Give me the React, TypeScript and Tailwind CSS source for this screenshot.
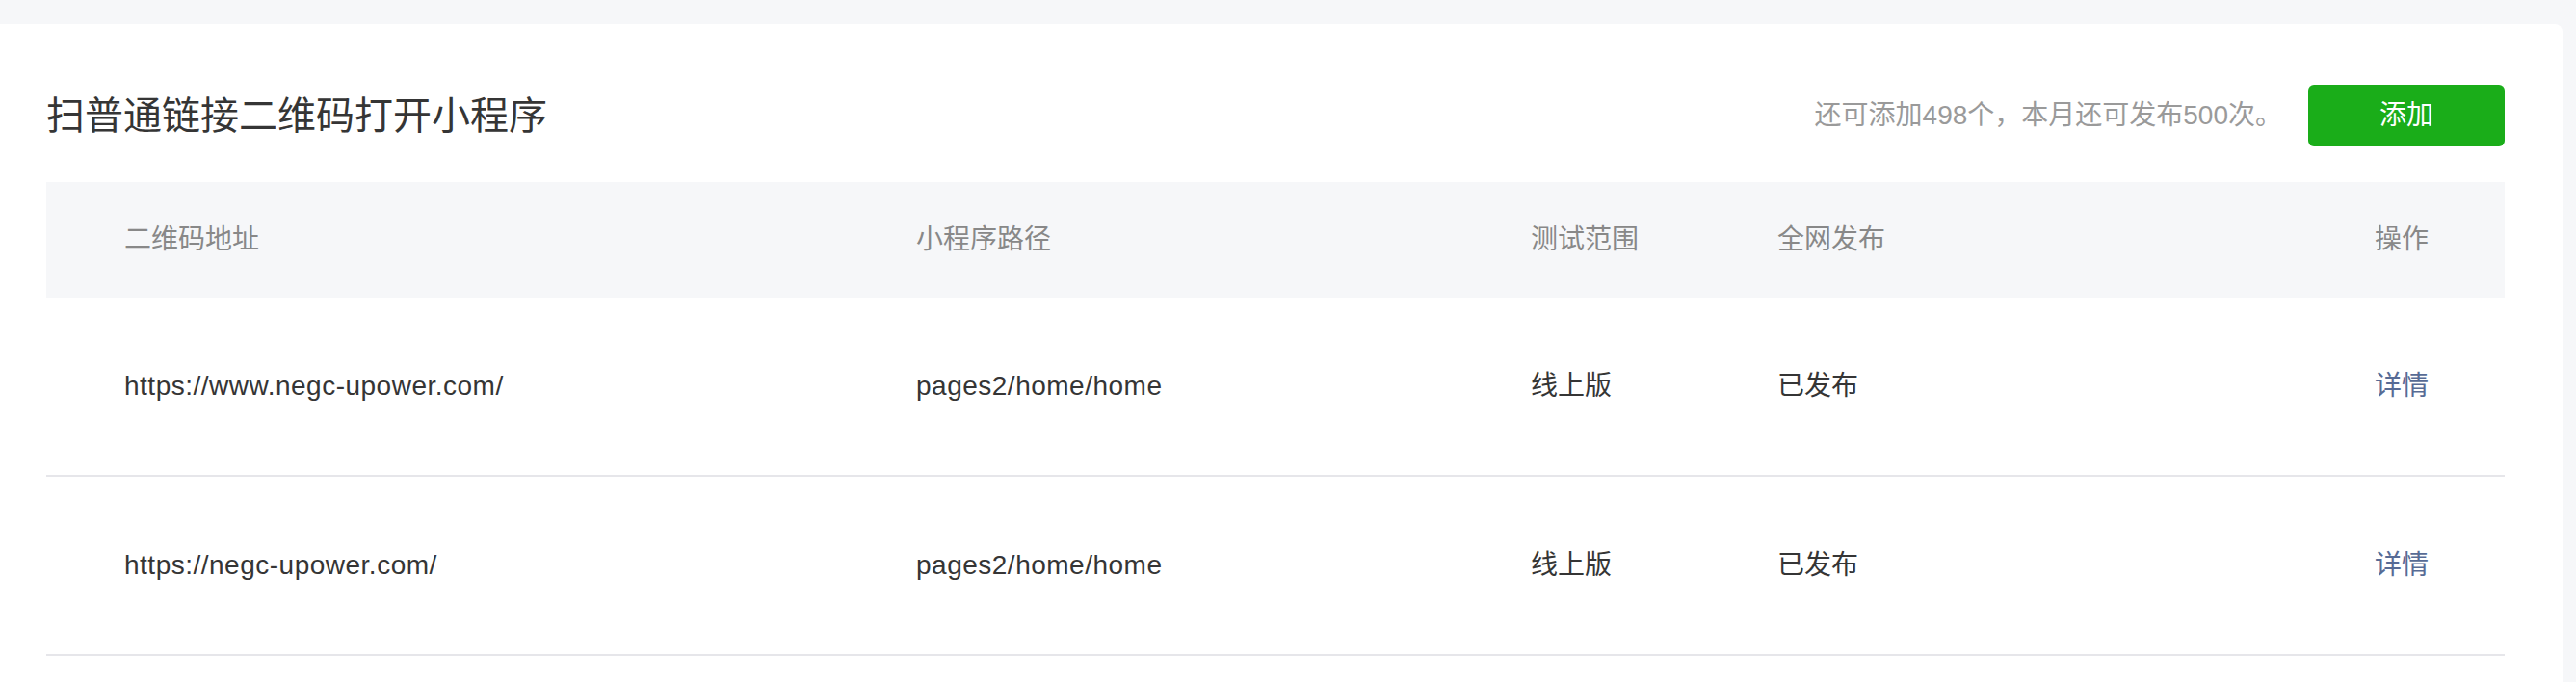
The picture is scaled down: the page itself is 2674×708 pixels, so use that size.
import React from 'react';

const cjk = { fontFamily: '"Liberation Sans", "Noto Sans CJK SC", sans-serif' };

interface LinkRow {
    url: string;
    path: string;
    scope: string;
    status: string;
}

const rows: LinkRow[] = [
    { url: 'https://www.negc-upower.com/', path: 'pages2/home/home', scope: '线上版', status: '已发布' },
    { url: 'https://negc-upower.com/', path: 'pages2/home/home', scope: '线上版', status: '已发布' },
];

const cols = 'grid grid-cols-[822px_638px_256px_620px_56px] pl-[81px] pr-[79px]';

function Watermark() {
    // faint user-id watermark tiled across the page
    return (
        <div className="pointer-events-none absolute left-[85px] top-[70px] flex flex-col">
            {Array.from({ length: 7 }).map((_, r) => (
                <div key={r} className="flex h-[92.5px]">
                    {Array.from({ length: 9 }).map((_, c) => (
                        <span key={c} className="w-[313px] shrink-0 text-[26px] leading-[26px] text-black/[0.012]">
                            1dZen0g2
                        </span>
                    ))}
                </div>
            ))}
        </div>
    );
}

export default function App() {
    return (
        <div className="relative h-[708px] overflow-hidden bg-[#f6f7f9] pt-[25px] pr-[14px]" style={cjk}>
            <div className="h-full rounded-tr-[8px] bg-white pl-[48px] pr-[60px]">
                <div className="flex items-center justify-between pt-[63px] pb-[37px]">
                    <h2 className="text-[40px] leading-[64px] font-normal text-[#353535]">扫普通链接二维码打开小程序</h2>
                    <div className="flex items-center">
                        <span className="mr-[27px] text-[28px] text-[#9a9a9a]">还可添加498个，本月还可发布500次。</span>
                        <button className="h-[64px] w-[204px] rounded-[6px] bg-[#1aad19] text-[28px] text-white">添加</button>
                    </div>
                </div>

                <div className={`${cols} h-[120px] items-center bg-[#f6f7f9] text-[28px] text-[#888888]`}>
                    <div>二维码地址</div>
                    <div>小程序路径</div>
                    <div>测试范围</div>
                    <div>全网发布</div>
                    <div>操作</div>
                </div>

                {rows.map((row, i) => (
                    <div
                        key={i}
                        className={`${cols} h-[186px] items-center border-b-2 border-[#e6e6ea] text-[28px] text-[#353535]`}
                    >
                        <div className="tracking-[0.5px]">{row.url}</div>
                        <div className="tracking-[0.5px]">{row.path}</div>
                        <div>{row.scope}</div>
                        <div>{row.status}</div>
                        <a className="whitespace-nowrap text-[#576b95]">详情</a>
                    </div>
                ))}
            </div>
            <Watermark />
        </div>
    );
}
